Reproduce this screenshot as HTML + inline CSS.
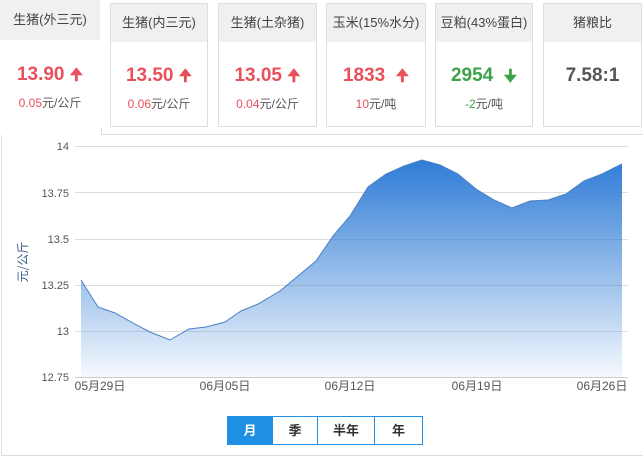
<!DOCTYPE html><html><head><meta charset="utf-8"><style>
body{margin:0;width:643px;height:461px;background:#fff;font-family:"Liberation Sans","Noto Sans CJK SC",sans-serif;position:relative;overflow:hidden}
.c{position:absolute;top:3px;height:124px;border:1px solid #ddd;box-sizing:border-box;background:#fff;text-align:center}
.h{height:38px;background:#f0f0f0;line-height:38px;font-size:13px;color:#444}
.v{font-size:19px;font-weight:bold;margin-top:22px;height:24px;line-height:24px}
.s{font-size:12px;color:#555;margin-top:7px}
.r{color:#e8505b}.g{color:#3ea24a}
.panel{position:absolute;left:1px;top:135px;width:642px;height:321px;border-left:1px solid #ddd;border-bottom:1px solid #ddd;box-sizing:border-box}
.btns{position:absolute;left:227px;top:416px;height:29px;display:flex;border:1px solid #1e8fe1;box-sizing:border-box}
.btns div{height:27px;line-height:27px;text-align:center;font-size:13px;color:#333;border-left:1px solid #1e8fe1;font-weight:bold}
.ar{font-size:16px}
</style></head><body>
<div class="panel"></div>
<div style="position:absolute;left:101px;top:127px;width:542px;height:8px;border-left:1px solid #ddd;border-bottom:1px solid #ddd;box-sizing:border-box"></div>
<div class="c" style="left:0;width:101px;height:135px;border:none;border-right:1px solid #fff;top:0"><div class="h" style="height:40px;line-height:40px">生猪(外三元)</div><div class="v r" style="margin-top:23px">13.90 <span class="ar">&#129033;</span></div><div class="s"><span class="r">0.05</span>元/公斤</div></div>
<div class="c" style="left:110px;width:98px"><div class="h">生猪(内三元)</div><div class="v r">13.50 <span class="ar">&#129033;</span></div><div class="s"><span class="r">0.06</span>元/公斤</div></div>
<div class="c" style="left:218px;width:99px"><div class="h">生猪(土杂猪)</div><div class="v r">13.05 <span class="ar">&#129033;</span></div><div class="s"><span class="r">0.04</span>元/公斤</div></div>
<div class="c" style="left:326px;width:100px"><div class="h">玉米(15%水分)</div><div class="v r">1833 &nbsp;<span class="ar">&#129033;</span></div><div class="s"><span class="r">10</span>元/吨</div></div>
<div class="c" style="left:435px;width:98px"><div class="h">豆粕(43%蛋白)</div><div class="v g">2954 &nbsp;<span class="ar">&#129035;</span></div><div class="s"><span class="g">-2</span>元/吨</div></div>
<div class="c" style="left:543px;width:99px"><div class="h">猪粮比</div><div class="v" style="color:#555">7.58:1</div></div>
<svg style="position:absolute;left:0;top:0" width="643" height="461">
<defs><linearGradient id="gr" x1="0" y1="160" x2="0" y2="377" gradientUnits="userSpaceOnUse"><stop offset="0" stop-color="#2f7cd6"/><stop offset="1" stop-color="#2f7cd6" stop-opacity="0.05"/></linearGradient></defs>
<g stroke="#ddd" stroke-width="1"><line x1="75" y1="146.5" x2="628" y2="146.5"/><line x1="75" y1="192.5" x2="628" y2="192.5"/><line x1="75" y1="239.5" x2="628" y2="239.5"/><line x1="75" y1="285.5" x2="628" y2="285.5"/><line x1="75" y1="331.5" x2="628" y2="331.5"/><line x1="75" y1="377.5" x2="628" y2="377.5" stroke="#ccc"/></g>
<path d="M81,280 L98,307 115,313 133,323 150,332 170,340 189,329 206,327 225,322 241,311 258,304 280,291 298,276 316,261 333,236 350,216 368,187 386,174 404,166 422,160 440,165 458,174 476,189 494,200 512,208 530,201 548,200 566,194 584,181 602,174 622,164 L622,377 L81,377Z" fill="url(#gr)" stroke="none"/>
<path d="M81,280 L98,307 115,313 133,323 150,332 170,340 189,329 206,327 225,322 241,311 258,304 280,291 298,276 316,261 333,236 350,216 368,187 386,174 404,166 422,160 440,165 458,174 476,189 494,200 512,208 530,201 548,200 566,194 584,181 602,174 622,164" fill="none" stroke="#4a7fc8" stroke-width="1"/>
<g font-size="11" fill="#555" text-anchor="end" font-family="Liberation Sans,sans-serif"><text x="69" y="150">14</text><text x="69" y="197">13.75</text><text x="69" y="243">13.5</text><text x="69" y="289">13.25</text><text x="69" y="335">13</text><text x="69" y="381">12.75</text></g>
<g font-size="12" fill="#555" text-anchor="middle" font-family="Liberation Sans,Noto Sans CJK SC,sans-serif"><text x="100" y="390">05月29日</text><text x="225" y="390">06月05日</text><text x="350" y="390">06月12日</text><text x="477" y="390">06月19日</text><text x="602" y="390">06月26日</text></g>
<text transform="translate(27,262) rotate(-90)" text-anchor="middle" font-size="12" fill="#3d5a8a" font-family="Noto Sans CJK SC,sans-serif">元/公斤</text>
</svg>
<div class="btns"><div style="width:44px;background:#1e8fe1;color:#fff;border-left:none">月</div><div style="width:44px">季</div><div style="width:56px">半年</div><div style="width:47px">年</div></div>
</body></html>
